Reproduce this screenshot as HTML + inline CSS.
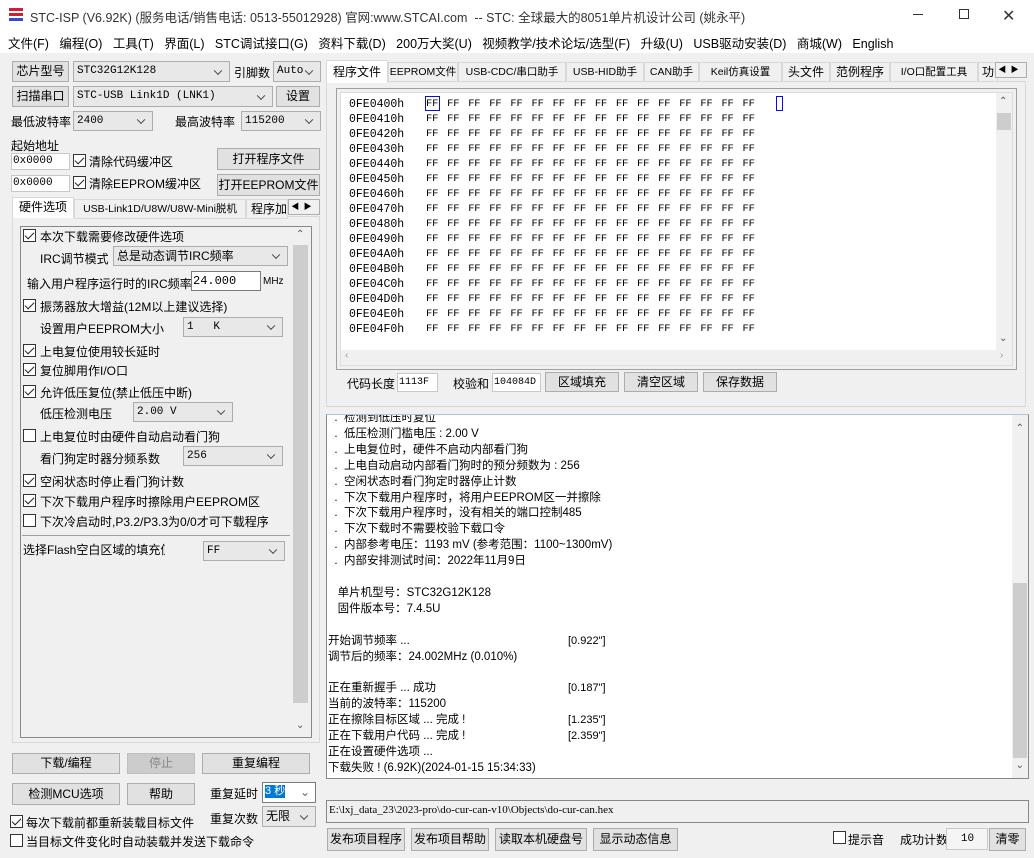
<!DOCTYPE html>
<html><head><meta charset="utf-8"><style>
*{box-sizing:border-box;margin:0;padding:0}
body{width:1034px;height:858px;background:#f0f0f0;font-family:"Liberation Sans","Noto Sans CJK SC",sans-serif;font-size:12px;color:#000;position:relative;overflow:hidden}
.a{position:absolute;white-space:nowrap}
.btn{position:absolute;background:#e1e1e1;border:1px solid #adadad;text-align:center;font-size:12px;white-space:nowrap}
.cb{position:absolute;background:#e8e8e8;border:1px solid #adadad;font-size:11px;padding-left:3px;font-family:"Liberation Mono","Noto Sans CJK SC",monospace;white-space:nowrap}
.cb:after{content:"";position:absolute;right:8px;top:50%;width:5px;height:5px;border-right:1px solid #444;border-bottom:1px solid #444;transform:translateY(-70%) rotate(45deg)}
.ed{position:absolute;background:#fff;border:1px solid #c8c8c8;font-size:11px;padding-left:1px;font-family:"Liberation Mono",monospace}
.ck{position:absolute;width:13px;height:13px;border:1px solid #333;background:#fff}
.ck.on:after{content:"";position:absolute;left:3px;top:0px;width:4px;height:8px;border-right:1.5px solid #222;border-bottom:1.5px solid #222;transform:rotate(45deg)}
.tab{position:absolute;border:1px solid #d9d9d9;background:#f0f0f0;font-size:10.5px;text-align:center;height:20px;line-height:19px;white-space:nowrap;overflow:hidden}
.hex div{height:15px;line-height:15px;white-space:pre}
</style></head><body>
<div class="a" style="left:0;top:0;width:1034px;height:31px;background:#fff"></div>
<div class="a" style="left:9px;top:8px;width:14px;height:14px">
<div style="position:absolute;left:0;top:0;width:14px;height:3px;background:#d02030"></div>
<div style="position:absolute;left:0;top:5px;width:14px;height:3px;background:#d02030"></div>
<div style="position:absolute;left:0;top:10px;width:14px;height:3px;background:#3050c0"></div></div>
<div class="a" style="left:30px;top:7px;font-size:12.5px;color:#333">STC-ISP (V6.92K) (服务电话/销售电话: 0513-55012928) 官网:www.STCAI.com &nbsp;-- STC: 全球最大的8051单片机设计公司 (姚永平)</div>
<div class="a" style="left:913px;top:14px;width:10px;height:1px;background:#333"></div>
<div class="a" style="left:959px;top:9px;width:10px;height:10px;border:1px solid #333"></div>
<div class="a" style="left:1002px;top:6px;font-size:16px;color:#333">✕</div>
<div class="a" style="left:0;top:31px;width:1034px;height:22px;background:#fff"></div>
<div class="a" style="left:8px;top:33px;font-size:12.5px">文件(F)&nbsp;&nbsp; 编程(O)&nbsp;&nbsp; 工具(T)&nbsp;&nbsp; 界面(L)&nbsp;&nbsp; STC调试接口(G)&nbsp;&nbsp; 资料下载(D)&nbsp;&nbsp; 200万大奖(U)&nbsp;&nbsp; 视频教学/技术论坛/选型(F)&nbsp;&nbsp; 升级(U)&nbsp;&nbsp; USB驱动安装(D)&nbsp;&nbsp; 商城(W)&nbsp;&nbsp; English</div>

<div class="btn" style="left:12px;top:61px;width:57px;height:21px;line-height:19px">芯片型号</div>
<div class="cb" style="left:73px;top:61px;width:157px;height:21px;line-height:19px">STC32G12K128</div>
<div class="a" style="left:234px;top:64px">引脚数</div>
<div class="cb" style="left:273px;top:61px;width:48px;height:21px;line-height:19px">Auto</div>
<div class="btn" style="left:12px;top:86px;width:57px;height:21px;line-height:19px">扫描串口</div>
<div class="cb" style="left:73px;top:86px;width:200px;height:21px;line-height:19px">STC-USB Link1D (LNK1)</div>
<div class="btn" style="left:276px;top:86px;width:44px;height:21px;line-height:19px">设置</div>
<div class="a" style="left:11px;top:113px">最低波特率</div>
<div class="cb" style="left:73px;top:111px;width:80px;height:20px;line-height:18px">2400</div>
<div class="a" style="left:175px;top:113px">最高波特率</div>
<div class="cb" style="left:241px;top:111px;width:80px;height:20px;line-height:18px">115200</div>
<div class="a" style="left:11px;top:137px">起始地址</div>
<div class="ed" style="left:11px;top:153px;width:59px;height:17px;line-height:15px">0x0000</div>
<div class="ck on" style="left:73px;top:154px"></div>
<div class="a" style="left:89px;top:153px">清除代码缓冲区</div>
<div class="btn" style="left:217px;top:148px;width:103px;height:22px;line-height:20px">打开程序文件</div>
<div class="ed" style="left:11px;top:175px;width:59px;height:17px;line-height:15px">0x0000</div>
<div class="ck on" style="left:73px;top:176px"></div>
<div class="a" style="left:89px;top:175px">清除EEPROM缓冲区</div>
<div class="btn" style="left:217px;top:174px;width:103px;height:22px;line-height:20px">打开EEPROM文件</div>
<div class="a" style="left:12px;top:216px;width:308px;height:527px;border:1px solid #d9d9d9;background:#f0f0f0"></div>
<div class="tab" style="left:12px;top:197px;width:62px;height:21px;background:#fff;border-bottom:none;font-size:12px">硬件选项</div>
<div class="tab" style="left:74px;top:199px;width:172px">USB-Link1D/U8W/U8W-Mini脱机</div>
<div class="tab" style="left:246px;top:199px;width:42px;text-align:left;padding-left:4px;font-size:12px">程序加</div>
<div class="a" style="left:288px;top:199px;width:32px;height:16px;border:1px solid #adadad;background:#f0f0f0;font-size:8px;line-height:14px">&nbsp;◀ &nbsp;▶</div>
<div class="a" style="left:20px;top:226px;width:292px;height:512px;border:1px solid #888;background:#f0f0f0"></div>
<div class="a" style="left:292px;top:227px;width:17px;height:510px;background:#f0f0f0"></div>
<div class="a" style="left:293px;top:245px;width:15px;height:458px;background:#cdcdcd"></div>
<div class="a" style="left:296px;top:229px;font-size:10px;color:#555">⌃</div>
<div class="a" style="left:296px;top:720px;font-size:10px;color:#555">⌄</div>

<div class="ck on" style="left:23px;top:229px"></div><div class="a" style="left:40px;top:228px">本次下载需要修改硬件选项</div>
<div class="a" style="left:40px;top:250px">IRC调节模式</div>
<div class="cb" style="left:113px;top:246px;width:175px;height:20px;line-height:18px;font-family:'Liberation Sans','Noto Sans CJK SC',sans-serif;font-size:12px">总是动态调节IRC频率</div>
<div class="a" style="left:27px;top:275px">输入用户程序运行时的IRC频率</div>
<div class="ed" style="left:191px;top:271px;width:70px;height:20px;line-height:18px;font-size:12px;border-color:#7a7a7a">24.000</div>
<div class="a" style="left:263px;top:276px;font-size:10px">MHz</div>
<div class="ck on" style="left:23px;top:299px"></div><div class="a" style="left:40px;top:298px">振荡器放大增益(12M以上建议选择)</div>
<div class="a" style="left:40px;top:320px">设置用户EEPROM大小</div>
<div class="cb" style="left:183px;top:317px;width:100px;height:20px;line-height:18px">1 &nbsp;&nbsp;K</div>
<div class="ck on" style="left:23px;top:344px"></div><div class="a" style="left:40px;top:343px">上电复位使用较长延时</div>
<div class="ck on" style="left:23px;top:363px"></div><div class="a" style="left:40px;top:362px">复位脚用作I/O口</div>
<div class="ck on" style="left:23px;top:385px"></div><div class="a" style="left:40px;top:384px">允许低压复位(禁止低压中断)</div>
<div class="a" style="left:40px;top:405px">低压检测电压</div>
<div class="cb" style="left:133px;top:402px;width:100px;height:20px;line-height:18px">2.00 V</div>
<div class="ck" style="left:23px;top:429px"></div><div class="a" style="left:40px;top:428px">上电复位时由硬件自动启动看门狗</div>
<div class="a" style="left:40px;top:450px">看门狗定时器分频系数</div>
<div class="cb" style="left:183px;top:446px;width:100px;height:20px;line-height:18px">256</div>
<div class="ck on" style="left:23px;top:474px"></div><div class="a" style="left:40px;top:473px">空闲状态时停止看门狗计数</div>
<div class="ck on" style="left:23px;top:494px"></div><div class="a" style="left:40px;top:493px">下次下载用户程序时擦除用户EEPROM区</div>
<div class="ck" style="left:23px;top:514px"></div><div class="a" style="left:40px;top:513px">下次冷启动时,P3.2/P3.3为0/0才可下载程序</div>
<div class="a" style="left:22px;top:535px;width:268px;height:1px;background:#a0a0a0"></div>
<div class="a" style="left:23px;top:541px;width:142px;overflow:hidden">选择Flash空白区域的填充值</div>
<div class="cb" style="left:203px;top:541px;width:82px;height:20px;line-height:18px">FF</div>

<div class="btn" style="left:12px;top:753px;width:108px;height:21px;line-height:19px">下载/编程</div>
<div class="btn" style="left:127px;top:753px;width:68px;height:21px;line-height:19px;background:#ccc;border-color:#bfbfbf;color:#888">停止</div>
<div class="btn" style="left:202px;top:753px;width:108px;height:21px;line-height:19px">重复编程</div>
<div class="btn" style="left:12px;top:783px;width:108px;height:22px;line-height:20px">检测MCU选项</div>
<div class="btn" style="left:127px;top:783px;width:68px;height:22px;line-height:20px">帮助</div>
<div class="a" style="left:210px;top:785px">重复延时</div>
<div class="a" style="left:262px;top:782px;width:54px;height:21px;background:#fff;border:1px solid #7a7a7a"></div>
<div class="a" style="left:265px;top:785px;background:#0078d7;color:#fff;font-size:11px;line-height:13px">3 秒</div>
<div class="a" style="left:300px;top:785px;color:#666">⌄</div>
<div class="a" style="left:210px;top:810px">重复次数</div>
<div class="cb" style="left:262px;top:806px;width:54px;height:21px;line-height:19px;font-size:12px;font-family:'Liberation Sans','Noto Sans CJK SC',sans-serif">无限</div>
<div class="ck on" style="left:10px;top:815px"></div><div class="a" style="left:26px;top:814px">每次下载前都重新装载目标文件</div>
<div class="ck" style="left:10px;top:834px"></div><div class="a" style="left:26px;top:833px">当目标文件变化时自动装载并发送下载命令</div>

<div class="a" style="left:326px;top:81px;width:700px;height:326px;border:1px solid #d9d9d9;background:#f0f0f0"></div>
<div class="tab" style="left:326px;top:60px;width:62px;height:23px;background:#fff;border-bottom:none;font-size:12px;line-height:22px">程序文件</div>
<div class="tab" style="left:388px;top:62px;width:70px">EEPROM文件</div>
<div class="tab" style="left:458px;top:62px;width:108px">USB-CDC/串口助手</div>
<div class="tab" style="left:566px;top:62px;width:78px">USB-HID助手</div>
<div class="tab" style="left:644px;top:62px;width:55px">CAN助手</div>
<div class="tab" style="left:699px;top:62px;width:83px">Keil仿真设置</div>
<div class="tab" style="left:782px;top:62px;width:48px;font-size:12px">头文件</div>
<div class="tab" style="left:830px;top:62px;width:60px;font-size:12px">范例程序</div>
<div class="tab" style="left:890px;top:62px;width:88px">I/O口配置工具</div>
<div class="tab" style="left:978px;top:62px;width:20px;font-size:12px">功</div>
<div class="a" style="left:995px;top:62px;width:32px;height:16px;border:1px solid #adadad;background:#f0f0f0;font-size:8px;line-height:14px">&nbsp;◀ &nbsp;▶</div>
<div class="a" style="left:336px;top:88px;width:681px;height:282px;border:1px solid #a0a0a0;background:#f0f0f0"></div>
<div class="a" style="left:340px;top:92px;width:673px;height:274px;background:#fff;border:1px solid #ddd"></div>
<div class="a" style="left:996px;top:93px;width:16px;height:257px;background:#f0f0f0"></div>
<div class="a" style="left:997px;top:113px;width:14px;height:17px;background:#cdcdcd"></div>
<div class="a" style="left:999px;top:96px;font-size:10px;color:#555">⌃</div>
<div class="a" style="left:999px;top:333px;font-size:10px;color:#555">⌄</div>
<div class="a" style="left:341px;top:350px;width:671px;height:15px;background:#f0f0f0"></div>
<div class="a" style="left:345px;top:350px;font-size:10px;color:#999">‹</div>
<div class="a" style="left:1000px;top:350px;font-size:10px;color:#999">›</div>
<div class="a" style="left:425px;top:96px;width:15px;height:15px;border:1px solid #0010e0"></div>
<div class="a" style="left:776px;top:96px;width:7px;height:15px;border:1px solid #0010e0"></div>
<div class="a hex" style="left:349px;top:97px;font-size:11.5px;font-family:'Liberation Mono',monospace">
<div>0FE0400h</div><div>0FE0410h</div><div>0FE0420h</div><div>0FE0430h</div><div>0FE0440h</div><div>0FE0450h</div><div>0FE0460h</div><div>0FE0470h</div><div>0FE0480h</div><div>0FE0490h</div><div>0FE04A0h</div><div>0FE04B0h</div><div>0FE04C0h</div><div>0FE04D0h</div><div>0FE04E0h</div><div>0FE04F0h</div></div>
<div class="a hex" style="left:426px;top:97px;font-size:10.5px;letter-spacing:-0.2px;word-spacing:2.8px;font-family:'Liberation Mono',monospace">
<div>FF FF FF FF FF FF FF FF FF FF FF FF FF FF FF FF</div><div>FF FF FF FF FF FF FF FF FF FF FF FF FF FF FF FF</div><div>FF FF FF FF FF FF FF FF FF FF FF FF FF FF FF FF</div><div>FF FF FF FF FF FF FF FF FF FF FF FF FF FF FF FF</div><div>FF FF FF FF FF FF FF FF FF FF FF FF FF FF FF FF</div><div>FF FF FF FF FF FF FF FF FF FF FF FF FF FF FF FF</div><div>FF FF FF FF FF FF FF FF FF FF FF FF FF FF FF FF</div><div>FF FF FF FF FF FF FF FF FF FF FF FF FF FF FF FF</div><div>FF FF FF FF FF FF FF FF FF FF FF FF FF FF FF FF</div><div>FF FF FF FF FF FF FF FF FF FF FF FF FF FF FF FF</div><div>FF FF FF FF FF FF FF FF FF FF FF FF FF FF FF FF</div><div>FF FF FF FF FF FF FF FF FF FF FF FF FF FF FF FF</div><div>FF FF FF FF FF FF FF FF FF FF FF FF FF FF FF FF</div><div>FF FF FF FF FF FF FF FF FF FF FF FF FF FF FF FF</div><div>FF FF FF FF FF FF FF FF FF FF FF FF FF FF FF FF</div><div>FF FF FF FF FF FF FF FF FF FF FF FF FF FF FF FF</div></div>
<div class="a" style="left:347px;top:375px">代码长度</div>
<div class="ed" style="left:397px;top:373px;width:41px;height:19px;line-height:17px;font-size:10px">1113F</div>
<div class="a" style="left:453px;top:375px">校验和</div>
<div class="ed" style="left:492px;top:373px;width:49px;height:19px;line-height:17px;font-size:10px">104084D</div>
<div class="btn" style="left:545px;top:372px;width:74px;height:20px;line-height:18px">区域填充</div>
<div class="btn" style="left:624px;top:372px;width:74px;height:20px;line-height:18px">清空区域</div>
<div class="btn" style="left:703px;top:372px;width:74px;height:20px;line-height:18px">保存数据</div>

<div class="a" style="left:326px;top:414px;width:703px;height:365px;background:#fff;border:1px solid #828790;border-top:1px solid #aac8e0;overflow:hidden">
<div style="position:absolute;right:0;top:0;width:16px;height:363px;background:#f0f0f0"></div>
<div style="position:absolute;right:1px;top:168px;width:14px;height:175px;background:#cdcdcd"></div>
<div style="position:absolute;right:4px;top:8px;font-size:10px;color:#555">⌃</div>
<div style="position:absolute;right:4px;top:345px;font-size:10px;color:#555">⌄</div>
<div style="position:absolute;left:1px;top:-4px;font-size:11.5px;line-height:15.9px;white-space:pre;font-family:'Liberation Sans','Noto Sans CJK SC',sans-serif">  .  检测到低压时复位
  .  低压检测门槛电压 : 2.00 V
  .  上电复位时，硬件不启动内部看门狗
  .  上电自动启动内部看门狗时的预分频数为 : 256
  .  空闲状态时看门狗定时器停止计数
  .  下次下载用户程序时，将用户EEPROM区一并擦除
  .  下次下载用户程序时，没有相关的端口控制485
  .  下次下载时不需要校验下载口令
  .  内部参考电压：1193 mV (参考范围：1100~1300mV)
  .  内部安排测试时间：2022年11月9日

   单片机型号：STC32G12K128
   固件版本号：7.4.5U

开始调节频率 ...
调节后的频率：24.002MHz (0.010%)

正在重新握手 ... 成功
当前的波特率：115200
正在擦除目标区域 ... 完成 !
正在下载用户代码 ... 完成 !
正在设置硬件选项 ...
下载失败 ! (6.92K)(2024-01-15 15:34:33)</div>
<div style="position:absolute;left:241px;top:-4px;font-size:11px;line-height:15.9px;white-space:pre">













[0.922"]


[0.187"]

[1.235"]
[2.359"]</div>
</div>
<div class="a" style="left:326px;top:800px;width:703px;height:23px;border:1px solid #828790;background:#f0f0f0"></div>
<div class="a" style="left:329px;top:804px;font-size:11px;font-family:'Liberation Serif',serif">E:\lxj_data_23\2023-pro\do-cur-can-v10\Objects\do-cur-can.hex</div>
<div class="btn" style="left:327px;top:828px;width:78px;height:23px;line-height:21px">发布项目程序</div>
<div class="btn" style="left:411px;top:828px;width:78px;height:23px;line-height:21px">发布项目帮助</div>
<div class="btn" style="left:495px;top:828px;width:92px;height:23px;line-height:21px">读取本机硬盘号</div>
<div class="btn" style="left:593px;top:828px;width:85px;height:23px;line-height:21px">显示动态信息</div>
<div class="ck" style="left:833px;top:831px"></div><div class="a" style="left:848px;top:831px">提示音</div>
<div class="a" style="left:900px;top:831px">成功计数</div>
<div class="ed" style="left:946px;top:828px;width:42px;height:22px;line-height:20px;text-align:center;background:#f5f5f5">10</div>
<div class="btn" style="left:989px;top:828px;width:37px;height:23px;line-height:21px">清零</div>
</body></html>
